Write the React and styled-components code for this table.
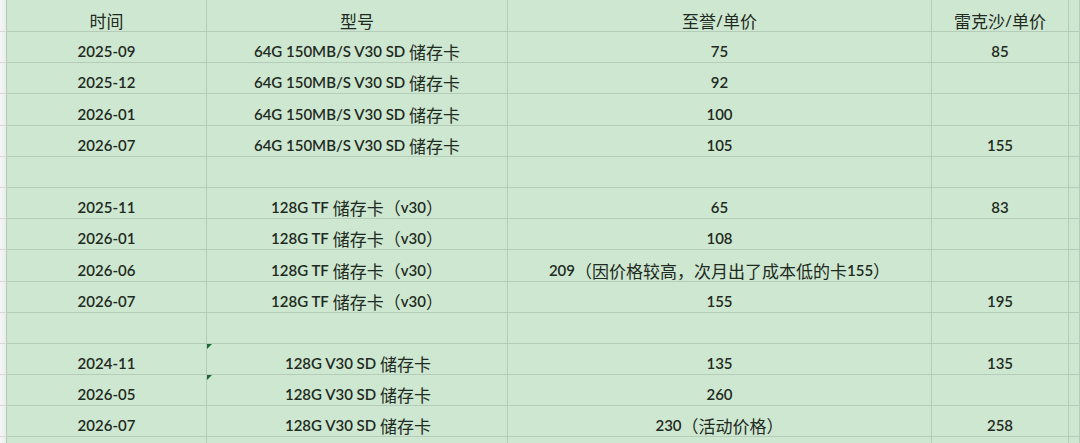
import React from 'react'
import styled, { createGlobalStyle } from 'styled-components'

const GlobalStyle = createGlobalStyle`
  html, body {
    margin: 0;
    padding: 0;
    background: #cde7d1;
    overflow: hidden;
  }
`

const Sheet = styled.div`
  width: 1080px;
  height: 443px;
  overflow: hidden;
  background: #cde7d1;
  font-family: Lato, "Noto Sans CJK SC", sans-serif;
  font-size: 15px;
  font-weight: 600;
  color: #1f2a21;
`

const Row = styled.div`
  display: grid;
  grid-template-columns: 7px 200px 301px 424px 137px 1fr;
  height: ${p => p.$h || 31.2}px;
  box-sizing: border-box;
`

const Gutter = styled.div`
  background: linear-gradient(90deg, #f6f7f7 0%, #e7eeea 100%);
  border-right: 1px solid #b9c4be;
  border-bottom: 1px solid #d6ddd9;
`

const Cell = styled.div`
  position: relative;
  display: flex;
  align-items: flex-end;
  justify-content: center;
  padding-bottom: 1px;
  box-sizing: border-box;
  border-right: 1px solid #b5ccb9;
  border-bottom: 1px solid #b5ccb9;
  white-space: pre;
  line-height: 19px;
  ${p => p.$shift ? `padding-left: ${p.$shift}px;` : ''}
`

const Zh = styled.span`
  font-family: "Noto Sans CJK SC", sans-serif;
  font-size: 17px;
  font-weight: 400;
`

const Marker = styled.span`
  position: absolute;
  top: 0;
  left: 0;
  width: 0;
  height: 0;
  border-top: 5px solid #1d6a30;
  border-right: 5px solid transparent;
`

const cjk = /(\s*[\u3000-\u303f\u4e00-\u9fff\uff00-\uffef]+)/

function Text({ value }) {
  if (!value) return null
  return value.split(cjk).map((part, i) =>
    cjk.test(part) ? <Zh key={i}>{part}</Zh> : <React.Fragment key={i}>{part}</React.Fragment>
  )
}

const sd64 = '64G 150MB/S V30 SD 储存卡'
const tf128 = '128G TF 储存卡（v30）'
const sd128 = '128G V30 SD 储存卡'

const rows = [
  ['时间', '型号', '至誉/单价', '雷克沙/单价'],
  ['2025-09', sd64, '75', '85'],
  ['2025-12', sd64, '92', ''],
  ['2026-01', sd64, '100', ''],
  ['2026-07', sd64, '105', '155'],
  ['', '', '', ''],
  ['2025-11', tf128, '65', '83'],
  ['2026-01', tf128, '108', ''],
  ['2026-06', tf128, '209（因价格较高，次月出了成本低的卡155）', ''],
  ['2026-07', tf128, '155', '195'],
  ['', '', '', ''],
  ['2024-11', sd128, '135', '135', true],
  ['2026-05', sd128, '260', '', true],
  ['2026-07', sd128, '230（活动价格）', '258'],
  ['', '', '', ''],
]

export default function App() {
  return (
    <Sheet>
      <GlobalStyle />
      {rows.map((r, i) => (
        <Row key={i} $h={i === 0 ? 32 : 31.2}>
          <Gutter />
          <Cell><Text value={r[0]} /></Cell>
          <Cell $shift={r[1] === sd128 ? 2 : 0}>
            {r[4] && <Marker />}
            <Text value={r[1]} />
          </Cell>
          <Cell><Text value={r[2]} /></Cell>
          <Cell><Text value={r[3]} /></Cell>
          <Cell />
        </Row>
      ))}
    </Sheet>
  )
}
